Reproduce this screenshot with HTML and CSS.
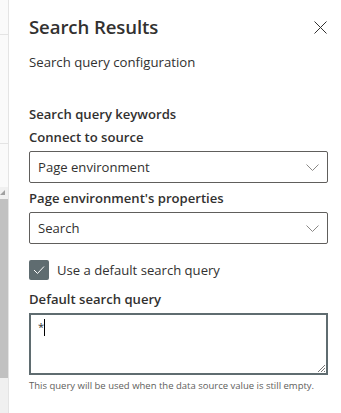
FILE: index.html
```
<!DOCTYPE html>
<html>
<head>
<meta charset="utf-8">
<link rel="stylesheet" href="styles.css">
</head>
<body>
<div class="page">
  <aside class="side">
    <div class="side-top"></div>
    <div class="side-mid"></div>
    <div class="side-gap"></div>
    <div class="scroll">
      <div class="scroll-arrow"></div>
      <div class="scroll-thumb"></div>
    </div>
  </aside>
  <main class="panel">
    <div class="header">
      <h1 class="title">Search Results</h1>
      <button class="close" aria-label="Close">
        <svg width="13" height="13" viewBox="0 0 13 13"><path d="M0.5 0.5 L12.5 12.5 M12.5 0.5 L0.5 12.5" stroke="#323130" stroke-width="1" fill="none"/></svg>
      </button>
    </div>
    <p class="subtitle">Search query configuration</p>
    <h2 class="section">Search query keywords</h2>
    <label class="label">Connect to source</label>
    <div class="dropdown">
      <span>Page environment</span>
      <svg class="chev" width="13" height="7" viewBox="0 0 13 7"><path d="M0.5 0.5 L6.5 6.5 L12.5 0.5" stroke="#8a8886" stroke-width="1" fill="none"/></svg>
    </div>
    <label class="label label2">Page environment's properties</label>
    <div class="dropdown">
      <span>Search</span>
      <svg class="chev" width="13" height="7" viewBox="0 0 13 7"><path d="M0.5 0.5 L6.5 6.5 L12.5 0.5" stroke="#8a8886" stroke-width="1" fill="none"/></svg>
    </div>
    <div class="check-row">
      <span class="checkbox">
        <svg width="12" height="10" viewBox="0 0 12 10"><path d="M1 5 L4.5 8.5 L11 1.5" stroke="#ffffff" stroke-width="1" fill="none"/></svg>
      </span>
      <span class="check-label">Use a default search query</span>
    </div>
    <label class="label label3">Default search query</label>
    <div class="textarea">
      <span class="star">*</span><span class="caret"></span>
      <svg class="grip" width="9" height="9" viewBox="0 0 9 9"><path d="M1 8 L8 1 M4 8 L8 4 M7 8 L8 7" stroke="#777" stroke-width="1" fill="none"/></svg>
    </div>
    <p class="help">This query will be used when the data source value is still empty.</p>
  </main>
</div>
</body>
</html>
```
FILE: styles.css
```
* { box-sizing: border-box; }
html, body { margin: 0; padding: 0; background: #ffffff; }
body {
  font-family: "Open Sans", "Noto Sans", "Liberation Sans", sans-serif;
  color: #323130;
  width: 341px;
  height: 413px;
  overflow: hidden;
}
.page { display: flex; height: 413px; }
.side {
  width: 9px;
  flex: none;
  border-right: 1px solid #e4e4e4;
  background: #fafafa;
  display: flex;
  flex-direction: column;
}
.side-top { height: 35px; border-bottom: 1px solid #e4e4e4; }
.side-mid { height: 109px; border-bottom: 1px solid #e4e4e4; }
.side-gap { height: 43px; }
.scroll { flex: 1; background: #f0f0f0; display: flex; flex-direction: column; }
.scroll-arrow {
  height: 12px;
  position: relative;
}
.scroll-arrow::after {
  content: "";
  position: absolute;
  left: 0; top: 3px;
  border-left: 5px solid transparent;
  border-right: 0 solid transparent;
  border-bottom: 5px solid #a0a0a0;
}
.scroll-thumb { height: 179px; background: #c1c1c1; }
.panel {
  flex: 1;
  padding: 13px 13px 0 20px;
  display: flex;
  flex-direction: column;
}
.header { display: flex; justify-content: space-between; align-items: center; height: 28px; }
.title {
  margin: 0;
  font-size: 18.6px;
  font-weight: 600;
  line-height: 28px;
  letter-spacing: -0.1px;
}
.close {
  border: 0;
  background: none;
  padding: 0;
  width: 13px;
  height: 13px;
  margin-right: 1px;
  display: flex;
}
.subtitle {
  margin: 11px 0 0;
  font-size: 13.2px;
  line-height: 20px;
}
.section {
  margin: 32px 0 0;
  font-size: 13.1px;
  font-weight: 600;
  line-height: 20px;
}
.label {
  display: block;
  margin-top: 3px;
  font-size: 13.1px;
  font-weight: 600;
  line-height: 20px;
}
.label2 { margin-top: 5px; }
.label3 { margin-top: 9px; }
.dropdown {
  margin-top: 4px;
  height: 32px;
  border: 1px solid #605e5c;
  border-radius: 2px;
  display: flex;
  align-items: center;
  justify-content: space-between;
  padding: 0 8px 0 8px;
  font-size: 13.1px;
}
.chev { margin-right: 0; margin-top: 1px; }
.check-row {
  margin-top: 16px;
  display: flex;
  align-items: center;
  height: 20px;
}
.checkbox {
  width: 20px;
  height: 20px;
  background: #5f6c70;
  border-radius: 2px;
  display: flex;
  align-items: center;
  justify-content: center;
}
.check-label { margin-left: 8px; font-size: 13.1px; }
.textarea {
  margin-top: 4px;
  height: 62px;
  border: 2px solid #5f6c70;
  position: relative;
  padding: 3px 0 0 7px;
  font-size: 13px;
  line-height: 18px;
  display: flex;
  align-items: flex-start;
}
.star { font-size: 11px; line-height: 18px; color: #323130; }
.caret { width: 1px; height: 17px; background: #000; margin-left: 0; margin-top: 1px; }
.grip { position: absolute; right: 0; bottom: 0; }
.help {
  margin: 4px 0 0;
  font-size: 9.5px;
  line-height: 14px;
  color: #605e5c;
  white-space: nowrap;
}
```
